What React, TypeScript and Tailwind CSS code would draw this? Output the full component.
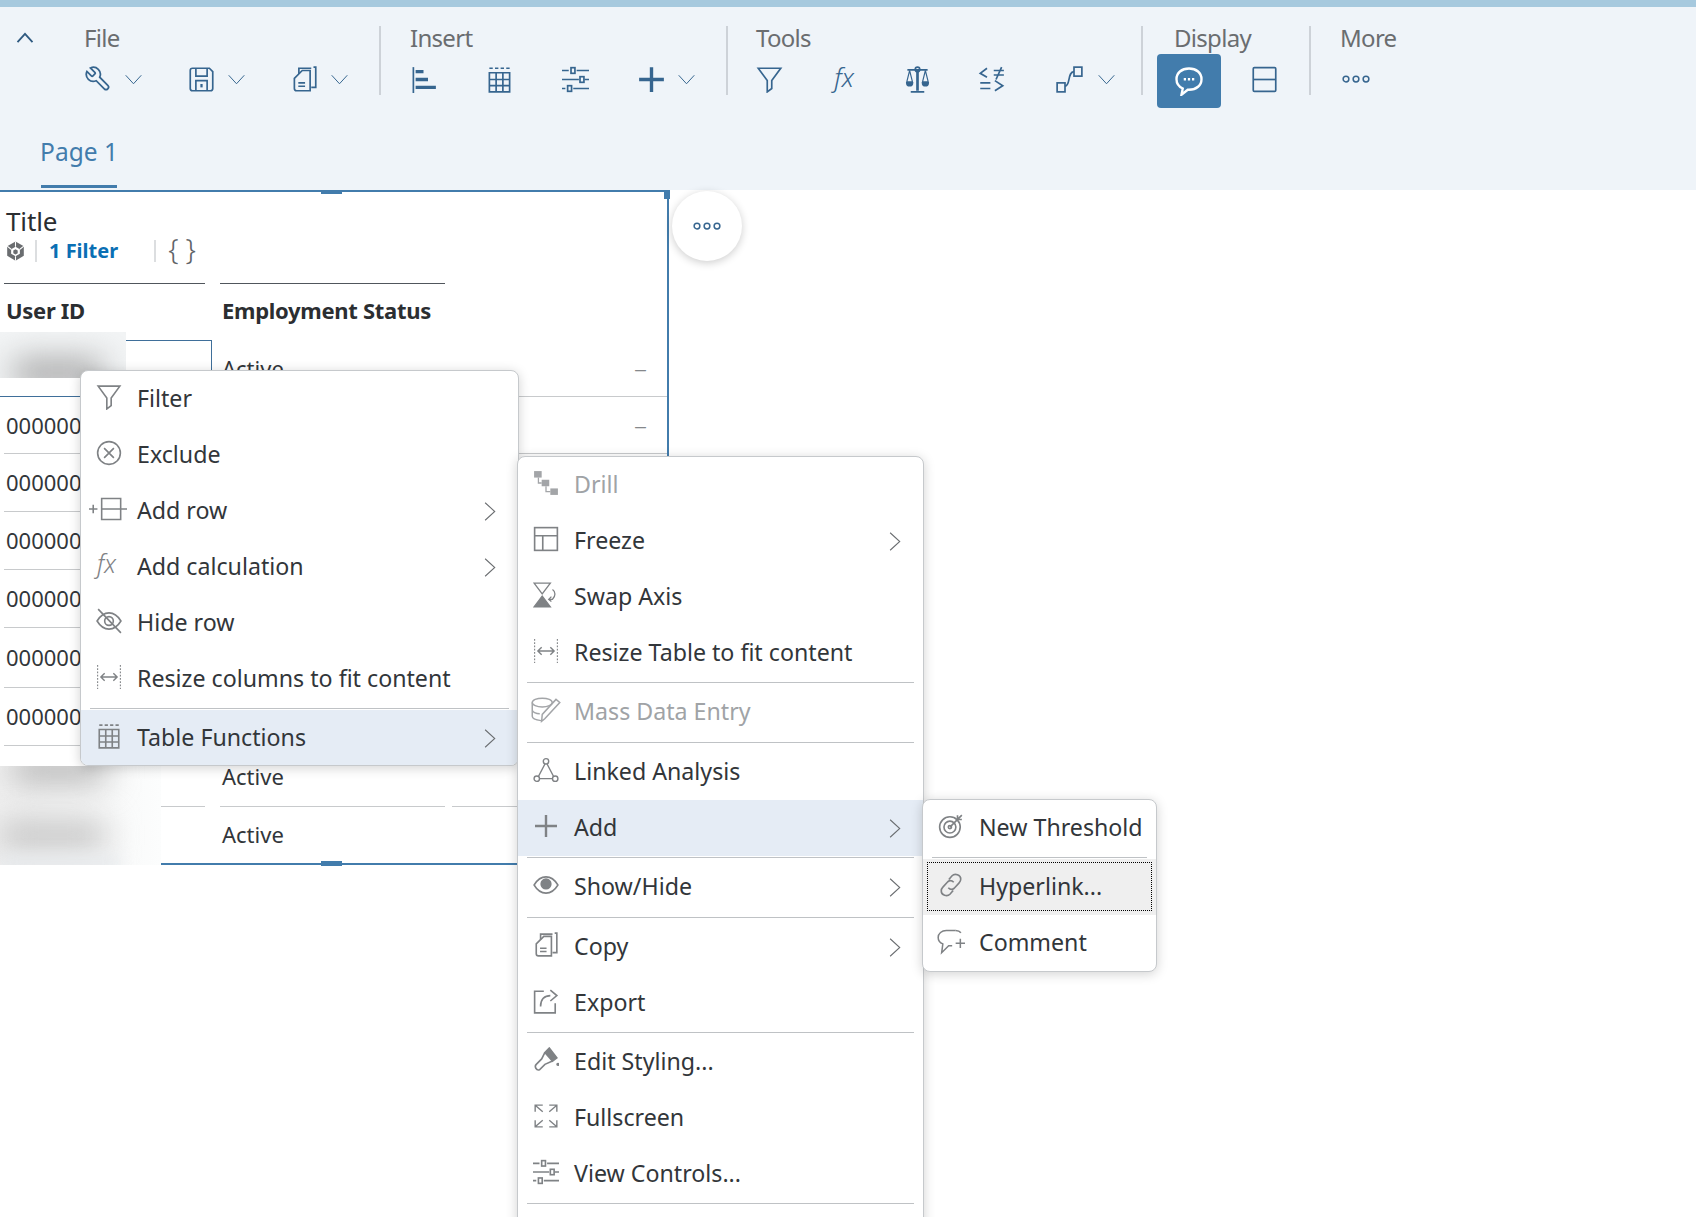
import React from "react";

type IP = { className?: string };
const S = ({ className = "", children, sw = 1.5 }: IP & { children: React.ReactNode; sw?: number }) => (
  <svg viewBox="0 0 24 24" fill="none" stroke="currentColor" strokeWidth={sw} className={className}>{children}</svg>
);

const Wrench = (p: IP) => <S {...p}><path transform="translate(24 0) scale(-1 1)" d="M14.7 6.3a1 1 0 0 0 0 1.4l1.6 1.6a1 1 0 0 0 1.4 0l3.77-3.77a6 6 0 0 1-7.94 7.94l-6.91 6.91a2.12 2.12 0 0 1-3-3l6.91-6.91a6 6 0 0 1 7.94-7.94l-3.76 3.76z" /></S>;
const Save = (p: IP) => <S {...p}><path d="M5 2h14l3 3v15a2 2 0 0 1-2 2H4a2 2 0 0 1-2-2V4a2 2 0 0 1 2-2z" /><path d="M7 2v7h10V2M7 22v-9h10v9" /><path d="M12 16v3" strokeWidth={2} /></S>;
const Copy = (p: IP) => <S {...p}><path d="M10 4h7v18H5a2 2 0 0 1-2-2V11z" /><path d="M7 7V2h11M20 1h2v18h-4" /><path d="M6.500 15h6M6.500 18h6" /></S>;
const SortBars = (p: IP) => <S {...p}><path d="M3 1v23" /><path d="M5 5h7M5 12h11M5 19h18" strokeWidth={3} /></S>;
const TableI = (p: IP) => <S {...p}><path d="M3 2h18" strokeDasharray="3 2" /><path d="M3 6h18v17H3zM3 12h18M3 17.500h18M9 6v17M15 6v17" /></S>;
const Sliders = (p: IP) => <S {...p}><path d="M0 4h6M13 4h11M0 12h15M20 12h4M0 20h3M10 20h14" /><rect x="8" y="1.500" width="3.500" height="5" /><rect x="16" y="9.500" width="3.500" height="5" /><rect x="5" y="17.500" width="3.500" height="5" /></S>;
const Plus = ({ className = "", w = 3 }: IP & { w?: number }) => <S className={className} sw={w}><path d="M12 1v22M1 12h22" /></S>;
const Chev = ({ className = "" }: IP) => <S className={className} sw={1.4}><path d="M1 6l11 12L23 6" /></S>;
const ChevR = ({ className = "" }: IP) => <S className={className} sw={1.2}><path d="M7 2l11 10L7 22" /></S>;
const Funnel = (p: IP) => <S {...p}><path d="M2 2h20l-8 11v7l-4 3V13z" /></S>;
const Fx = ({ className = "" }: IP) => (
  <svg viewBox="0 0 24 24" className={`overflow-visible ${className}`}>
    <text x="1" y="19" fill="currentColor" fontFamily="'Noto Sans', sans-serif" fontStyle="italic" fontWeight={300} fontSize="23">fx</text>
  </svg>
);
const Balance = (p: IP) => <S {...p}><path d="M12 3v19" strokeWidth={2.4} /><path d="M6 23h12M3 3.500h18" /><circle cx="12" cy="3" r="2" /><path d="M5 4L2.500 14h5zM19 4l-2.500 10h5z" strokeWidth={1} /><path d="M2.500 15a2.500 2.500 0 0 0 5 0zM16.500 15a2.500 2.500 0 0 0 5 0z" fill="currentColor" /></S>;
const Compare = (p: IP) => <S {...p}><path d="M8 2L2 6.500 8 10M2 15h9M2 20h9M15 13l7 4.500-7 4.500M14 4h9M14 8h9M21 1l-5 11" /></S>;
const Nodes = (p: IP) => <S {...p}><rect x="1" y="15" width="7" height="8" /><rect x="16" y="1" width="7" height="8" /><path d="M8 18c5 0 2-13 8-13" /></S>;
const Bubble = (p: IP) => <S {...p} sw={1.9}><path d="M12 2c6 0 10 3.600 10 8.500S18 19 12 19h-1l-5 4 1-5c-3-1.500-5-4.300-5-7.500C2 5.600 6 2 12 2z" /><path d="M7.800 10.500h1.800M11.100 10.500h1.800M14.400 10.500h1.800" strokeWidth={2} /></S>;
const Layout = (p: IP) => <S {...p}><rect x="2" y="1.500" width="20" height="21" rx="1" /><path d="M2 12h20" /></S>;
const Dots = (p: IP) => <S {...p} sw={1.2}><circle cx="4" cy="12" r="2.300" /><circle cx="12" cy="12" r="2.300" /><circle cx="20" cy="12" r="2.300" /></S>;
const Cube = (p: IP) => (
  <svg viewBox="0 0 24 24" className={p.className} fill="currentColor">
    <path d="M12 1l9.500 5.500v11L12 23l-9.500-5.500v-11z" />
    <path d="M12 7l5 3v5l-5 3-5-3v-5z" fill="#fff" />
    <path d="M12 10l2.500 1.500v3L12 16l-2.500-1.500v-3z" />
    <path d="M12 1v6M2.500 6.500L7 10M21.500 6.500L17 10M12 18v5" stroke="#fff" strokeWidth={1.2} />
  </svg>
);

const CircleX = (p: IP) => <S {...p}><circle cx="12" cy="12" r="10.500" /><path d="M7.500 7.500l9 9M16.500 7.500l-9 9" /></S>;
const AddRow = ({ className = "" }: IP) => <svg viewBox="0 0 36 24" fill="none" stroke="currentColor" strokeWidth={1.5} className={className}><path d="M0 12h8M4 8v8" /><path d="M12 2h18v20H12zM12 12h24" /></svg>;
const EyeOff = (p: IP) => <S {...p}><path d="M1 12c3-5 7-7.500 11-7.500S20 7 23 12c-3 5-7 7.500-11 7.500S4 17 1 12z" /><circle cx="12" cy="12" r="4" /><path d="M2 1l21 22" /></S>;
const Resize = (p: IP) => <S {...p} sw={1}><path d="M1.500 1v22M22.500 1v22" strokeDasharray="1.500 1.500" /><path d="M5 12h14M8 8.500L4.500 12 8 15.500M16 8.500l3.500 3.500-3.500 3.500" strokeWidth={1.300} /></S>;
const Drill = ({ className = "" }: IP) => <svg viewBox="0 0 24 24" className={className} fill="currentColor"><rect x="1" y="1" width="7" height="6" /><rect x="8" y="9" width="7" height="6" /><rect x="16" y="17" width="7" height="6" /><path d="M5 7v5h3M12 15v5h4" fill="none" stroke="currentColor" strokeWidth={1.200} /></svg>;
const Freeze = (p: IP) => <S {...p}><rect x="1.500" y="1.500" width="21" height="21" /><path d="M1.500 9h21M9 9v13.500" /></S>;
const Swap = ({ className = "" }: IP) => <svg viewBox="0 0 24 24" className={className} fill="none" stroke="currentColor" strokeWidth={1.200}><path d="M1 1h15l-7.500 10z" /><path d="M1 23h15l-7.500-10z" fill="currentColor" /><path d="M18 7c3 2 3 6 0 9l-3 0M17 13.500L14.500 16l2.500 2" /></svg>;
const Mass = (p: IP) => <S {...p} sw={1.2}><ellipse cx="9" cy="6" rx="8" ry="3.500" /><path d="M1 6v11c0 1.500 3 3 7 3.500M1 12c0 1.500 3 3 6 3" /><path d="M11 19l12-13-3-2.500L9 15.500 8.500 21z" /></S>;
const Linked = (p: IP) => <S {...p} sw={1.3}><circle cx="12" cy="4" r="2.500" /><circle cx="3.500" cy="20" r="2.500" /><circle cx="20.500" cy="20" r="2.500" /><path d="M11 6.500L5 18M13 6.500L19 18M6 20h12" /></S>;
const Eye = ({ className = "" }: IP) => <svg viewBox="0 0 24 24" className={className} fill="none" stroke="currentColor" strokeWidth={1.400}><path d="M1 12c3-5 7-7.500 11-7.500S20 7 23 12c-3 5-7 7.500-11 7.500S4 17 1 12z" /><circle cx="12" cy="11" r="4.500" fill="currentColor" /></svg>;
const Export = (p: IP) => <S {...p}><path d="M10 3H1.500v20h19v-9" /><path d="M7 17c0-7 4-10 9-10M16 2l6 5-6 5" /></S>;
const Brush = ({ className = "" }: IP) => <svg viewBox="0 0 24 24" className={className} fill="none" stroke="currentColor" strokeWidth={1.500}><path d="M15 1l7 9-4 3-7-8z" fill="currentColor" /><path d="M11 5l-3 6-5 5c-2 2 0 6 3 5l5-5 7-3" /><circle cx="23" cy="16" r=".8" fill="currentColor" /></svg>;
const Full = (p: IP) => <S {...p} sw={1.3}><path d="M2 2l7 6M15 8l7-6M2 22l7-6M15 16l7 6M2 8V2h7M15 2h7v6M2 16v6h7M15 22h7v-6" /></S>;
const Target = (p: IP) => <S {...p}><circle cx="11" cy="13" r="9.500" /><circle cx="11" cy="13" r="5.500" /><circle cx="11" cy="13" r="1.500" /><path d="M11 13L22 2M18 2v4h4" /></S>;
const LinkI = (p: IP) => <S {...p}><path d="M10 7l3-3.500c2.500-2.500 8-1 8 3 0 1.500-.5 2.500-1.500 3.500L15 15c-2 1.500-4 1-5.500-.5" /><path d="M14 17l-3 3.500c-2.500 2.500-8 1-8-3 0-1.500.5-2.500 1.500-3.500L9 9c2-1.500 4-1 5.500.5" /></S>;
const CommentPlus = (p: IP) => <S {...p} sw={1.3}><path d="M16 3H8C4 3 1 5.500 1 9c0 2.500 1.500 4.500 4 5.500L4 22l6-6h3" /><path d="M16 3c2 0 3.500.7 4.500 2M16 14h8M20 10v8" /></S>;

type ItemT = { label: string; icon: (p: IP) => React.ReactElement; chev?: boolean; dis?: boolean; cls?: string };
const Sep = ({ className = "h-[3px]" }: IP) => <div className={`flex items-center px-[9px] ${className}`}><div className="h-[1px] w-full bg-[#bfc2c5]" /></div>;

const Item = ({ item, hi, x }: { item: ItemT; hi?: boolean; x: string }) => {
  const I = item.icon;
  return (
    <div className={`h-[56px] flex items-center shrink-0 ${hi ? "bg-[#e5ecf5]" : ""}`}>
      <div className={`flex justify-center items-center shrink-0 mb-[4px] ${x} ${item.dis ? "text-[#a3a5a8]" : "text-[#7f8285]"}`}>
        <I className={item.cls ?? "w-[26px] h-[26px]"} />
      </div>
      <span className={`whitespace-nowrap ${item.dis ? "text-[#a0a3a6]" : "text-[#32363a]"}`}>{item.label}</span>
      {item.chev && <ChevR className="w-[21px] h-[21px] text-[#6a6d70] ml-auto mr-[18px]" />}
    </div>
  );
};

const menuBox = "absolute bg-white border border-[#c6c9cc] rounded-[8px] shadow-[0_2px_12px_rgba(0,0,0,0.18)] text-[23.2px] leading-none overflow-hidden";

const rows: { id?: string; st?: string; dash?: boolean; h: string; line: string }[] = [
  { st: "Active", dash: true, h: "h-[57px]", line: "border-[#3f6f9a]" },
  { id: "000000", dash: true, h: "h-[57px]", line: "border-[#c8cacc]" },
  { id: "000000", h: "h-[58px]", line: "border-[#c8cacc]" },
  { id: "000000", h: "h-[58px]", line: "border-[#c8cacc]" },
  { id: "000000", h: "h-[58px]", line: "border-[#c8cacc]" },
  { id: "000000", h: "h-[60px]", line: "border-[#c8cacc]" },
  { id: "000000", h: "h-[58px]", line: "border-[#c8cacc]" },
  { st: "Active", h: "h-[61px]", line: "border-[#c8cacc]" },
  { st: "Active", h: "h-[55px]", line: "border-transparent" },
];

const icon = "w-[27px] h-[27px]";
const chev = "w-[17px] h-[17px] ml-[13px] text-[#36658f]";
const label = "h-[26px] text-[24px] leading-[24px] text-[#6a6d70] tracking-[-0.7px]";
const iconRow = "h-[54px] flex items-center text-[#36658f]";
const grp = "h-[69px] border-r-2 border-[#cdd2d8] shrink-0";

export default function App() {
  return (
    <div className="relative w-[1696px] h-[1217px] overflow-hidden bg-white font-['Noto_Sans',sans-serif] text-[#32363a]">
      <div className="h-[7px] bg-[#a6c9de]" />
      <div className="h-[183px] bg-[#eff4f9]">
        <div className="flex pt-[19px] h-[120px]">
          <div className="w-[84px] shrink-0 pl-[15px] pt-[2px]"><S className="w-[20px] h-[20px] text-[#2f5a80]" sw={2.200}><path d="M3 17L12 7l9 10" /></S></div>
          <div className={`${grp} w-[297px]`}>
            <div className={label}>File</div>
            <div className={iconRow}>
              <Wrench className="w-[28px] h-[28px]" /><Chev className={chev} />
              <Save className={`${icon} ml-[46px]`} /><Chev className={chev} />
              <Copy className={`${icon} ml-[46px]`} /><Chev className={chev} />
            </div>
          </div>
          <div className={`${grp} w-[347px] pl-[29px]`}>
            <div className={label}>Insert</div>
            <div className={iconRow}>
              <SortBars className={icon} />
              <TableI className={`${icon} ml-[49px]`} />
              <Sliders className={`${icon} ml-[49px]`} />
              <Plus className={`${icon} ml-[49px]`} /><Chev className={chev} />
            </div>
          </div>
          <div className={`${grp} w-[415px] pl-[28px]`}>
            <div className={label}>Tools</div>
            <div className={iconRow}>
              <Funnel className={icon} />
              <Fx className={`${icon} ml-[50px]`} />
              <Balance className={`${icon} ml-[44px]`} />
              <Compare className={`${icon} ml-[47px]`} />
              <Nodes className={`${icon} ml-[51px]`} /><Chev className={`${chev} ml-[15px]`} />
            </div>
          </div>
          <div className={`${grp} w-[168px] pl-[14px]`}>
            <div className={`${label} pl-[17px]`}>Display</div>
            <div className={iconRow}>
              <div className="w-[64px] h-[54px] mt-[3px] rounded-[4px] bg-[#427cac] flex items-center justify-center text-white"><Bubble className="w-[30px] h-[30px]" /></div>
              <Layout className={`${icon} ml-[30px]`} />
            </div>
          </div>
          <div className="pl-[29px]">
            <div className={label}>More</div>
            <div className={iconRow}><Dots className={`w-[30px] h-[30px] ml-[1px]`} /></div>
          </div>
        </div>
        <div className="pl-[41px]">
          <div className="w-[76px] h-[61px] border-b-[3px] border-[#427cac] flex justify-center items-center text-[24.5px] text-[#427cac] whitespace-nowrap pb-[7px]">Page 1</div>
        </div>
      </div>

      <div className="relative w-[669px] h-[675px] border-t-2 border-r-2 border-b-2 border-[#427cac]">
        <div className="absolute -top-[2px] left-[321px] w-[21px] h-[4px] bg-[#427cac]" />
        <div className="absolute -bottom-[3px] left-[321px] w-[21px] h-[5px] bg-[#427cac]" />
        <div className="absolute -top-[2px] -right-[3px] w-[6px] h-[9px] bg-[#427cac]" />
        <div className="pl-[6px] pt-[12px] text-[26px] leading-[34px] text-[#2b2e31] tracking-[-0.1px]">Title</div>
        <div className="flex items-center h-[25px] pl-[5px]">
          <Cube className="w-[21px] h-[24px] text-[#6a6d70]" />
          <div className="w-[2px] h-[22px] bg-[#dcdee0] ml-[9px]" />
          <span className="ml-[12px] text-[20px] font-bold text-[#0a6fb4]">1 Filter</span>
          <div className="w-[2px] h-[22px] bg-[#dcdee0] ml-[36px]" />
          <span className="ml-[12px] text-[29px] leading-[25px] -mt-[5px] font-light text-[#5f6468] tracking-[7px]">{"{}"}</span>
        </div>
        <div className="flex px-[4px] mt-[20px] text-[22px] font-bold text-[#2b2e31]">
          <div className="w-[201px] h-[57px] pb-[4px] border-t border-[#50565c] flex items-center pl-[2px] tracking-[-0.3px]">User ID</div>
          <div className="w-[225px] ml-[15px] pb-[4px] border-t border-[#50565c] flex items-center pl-[2px] tracking-[-0.3px] whitespace-nowrap">Employment Status</div>
        </div>
        {rows.map((r, i) => (
          <div key={i} className={`flex pl-[4px] ${r.h} text-[22px]`}>
            <div className={`shrink-0 ${i === 0 ? "border-t border-r border-b border-[#3f6f9a] -ml-[4px] w-[212px]" : `w-[201px] border-b ${r.line}`} flex items-center pl-[2px]`}>{r.id}</div>
            <div className={`w-[225px] shrink-0 ${i === 0 ? "ml-[8px] border-[#c8cacc]" : `ml-[15px] ${r.line}`} border-b flex items-center pl-[2px]`}>{r.st}</div>
            <div className={`flex-1 ml-[7px] border-b ${i < 8 ? "border-[#c8cacc]" : "border-transparent"} flex items-center justify-end pr-[20px] text-[26px] font-light text-[#85888b]`}>{r.dash ? "–" : ""}</div>
          </div>
        ))}
      </div>

      {/* blurred, masked cells */}
      <div className="absolute left-0 top-[332px] w-[126px] h-[46px] bg-[#f2f4f5] overflow-hidden">
        <div className="absolute left-[14px] top-[28px] w-[88px] h-[26px] bg-[#a0a0a0] blur-lg" />
      </div>
      <div className="absolute left-0 top-[766px] w-[161px] h-[99px] bg-gradient-to-r from-[#f1f1f1] to-[#fcfdfd] overflow-hidden">
        <div className="absolute left-[12px] -top-[10px] w-[94px] h-[26px] bg-[#b0b0b0] blur-lg" />
        <div className="absolute left-0 top-[56px] w-[106px] h-[26px] bg-[#bfbfbf] blur-lg" />
        <div className="absolute left-0 top-[90px] w-[120px] h-[14px] bg-[#e6e9ec] blur-sm" />
      </div>

      {/* first context menu */}
      <div className={`${menuBox} left-[80px] top-[370px] w-[439px] h-[396px]`}>
        {([
          { label: "Filter", icon: Funnel },
          { label: "Exclude", icon: CircleX },
          { label: "Add row", icon: AddRow, chev: true, cls: "w-[38px] h-[26px] -ml-[3px]" },
          { label: "Add calculation", icon: Fx, chev: true },
          { label: "Hide row", icon: EyeOff },
          { label: "Resize columns to fit content", icon: Resize },
        ] as ItemT[]).map((it) => <Item key={it.label} item={it} x="w-[56px]" />)}
        <Sep />
        <Item item={{ label: "Table Functions", icon: TableI, chev: true }} hi x="w-[56px]" />
      </div>

      {/* second context menu */}
      <div className={`${menuBox} left-[517px] top-[456px] w-[407px] h-[800px]`}>
        {([
          { label: "Drill", icon: Drill, dis: true },
          { label: "Freeze", icon: Freeze, chev: true },
          { label: "Swap Axis", icon: Swap },
          { label: "Resize Table to fit content", icon: Resize },
        ] as ItemT[]).map((it) => <Item key={it.label} item={it} x="w-[56px]" />)}
        <Sep />
        <Item item={{ label: "Mass Data Entry", icon: Mass, dis: true, cls: "w-[30px] h-[30px]" }} x="w-[56px]" />
        <Sep className="h-[4px]" />
        <Item item={{ label: "Linked Analysis", icon: Linked }} x="w-[56px]" />
        <Item item={{ label: "Add", icon: (p) => <Plus {...p} w={2.4} />, chev: true, cls: "w-[24px] h-[24px]" }} hi x="w-[56px]" />
        <Sep />
        <Item item={{ label: "Show/Hide", icon: Eye, chev: true }} x="w-[56px]" />
        <Sep className="h-[4px]" />
        <Item item={{ label: "Copy", icon: Copy, chev: true }} x="w-[56px]" />
        <Item item={{ label: "Export", icon: Export }} x="w-[56px]" />
        <Sep />
        <Item item={{ label: "Edit Styling...", icon: Brush }} x="w-[56px]" />
        <Item item={{ label: "Fullscreen", icon: Full }} x="w-[56px]" />
        <Item item={{ label: "View Controls...", icon: Sliders }} x="w-[56px]" />
        <Sep />
      </div>

      {/* third context menu */}
      <div className={`${menuBox} left-[922px] top-[799px] w-[235px] h-[173px]`}>
        <Item item={{ label: "New Threshold", icon: Target }} x="w-[56px]" />
        <Sep />
        <div className="relative">
          <div className="absolute left-[4px] right-[4px] top-[3px] bottom-[4px] border border-dotted border-black" />
          <div className="bg-[#efefef]"><Item item={{ label: "Hyperlink...", icon: LinkI }} x="w-[56px]" /></div>
        </div>
        <Item item={{ label: "Comment", icon: CommentPlus, cls: "w-[30px] h-[28px]" }} x="w-[56px]" />
      </div>

      {/* floating more button */}
      <div className="absolute left-[672px] top-[191px] w-[70px] h-[70px] rounded-full bg-white shadow-[0_2px_8px_rgba(0,0,0,0.2)] flex items-center justify-center text-[#36658f]">
        <Dots className="w-[30px] h-[30px]" />
      </div>
    </div>
  );
}
